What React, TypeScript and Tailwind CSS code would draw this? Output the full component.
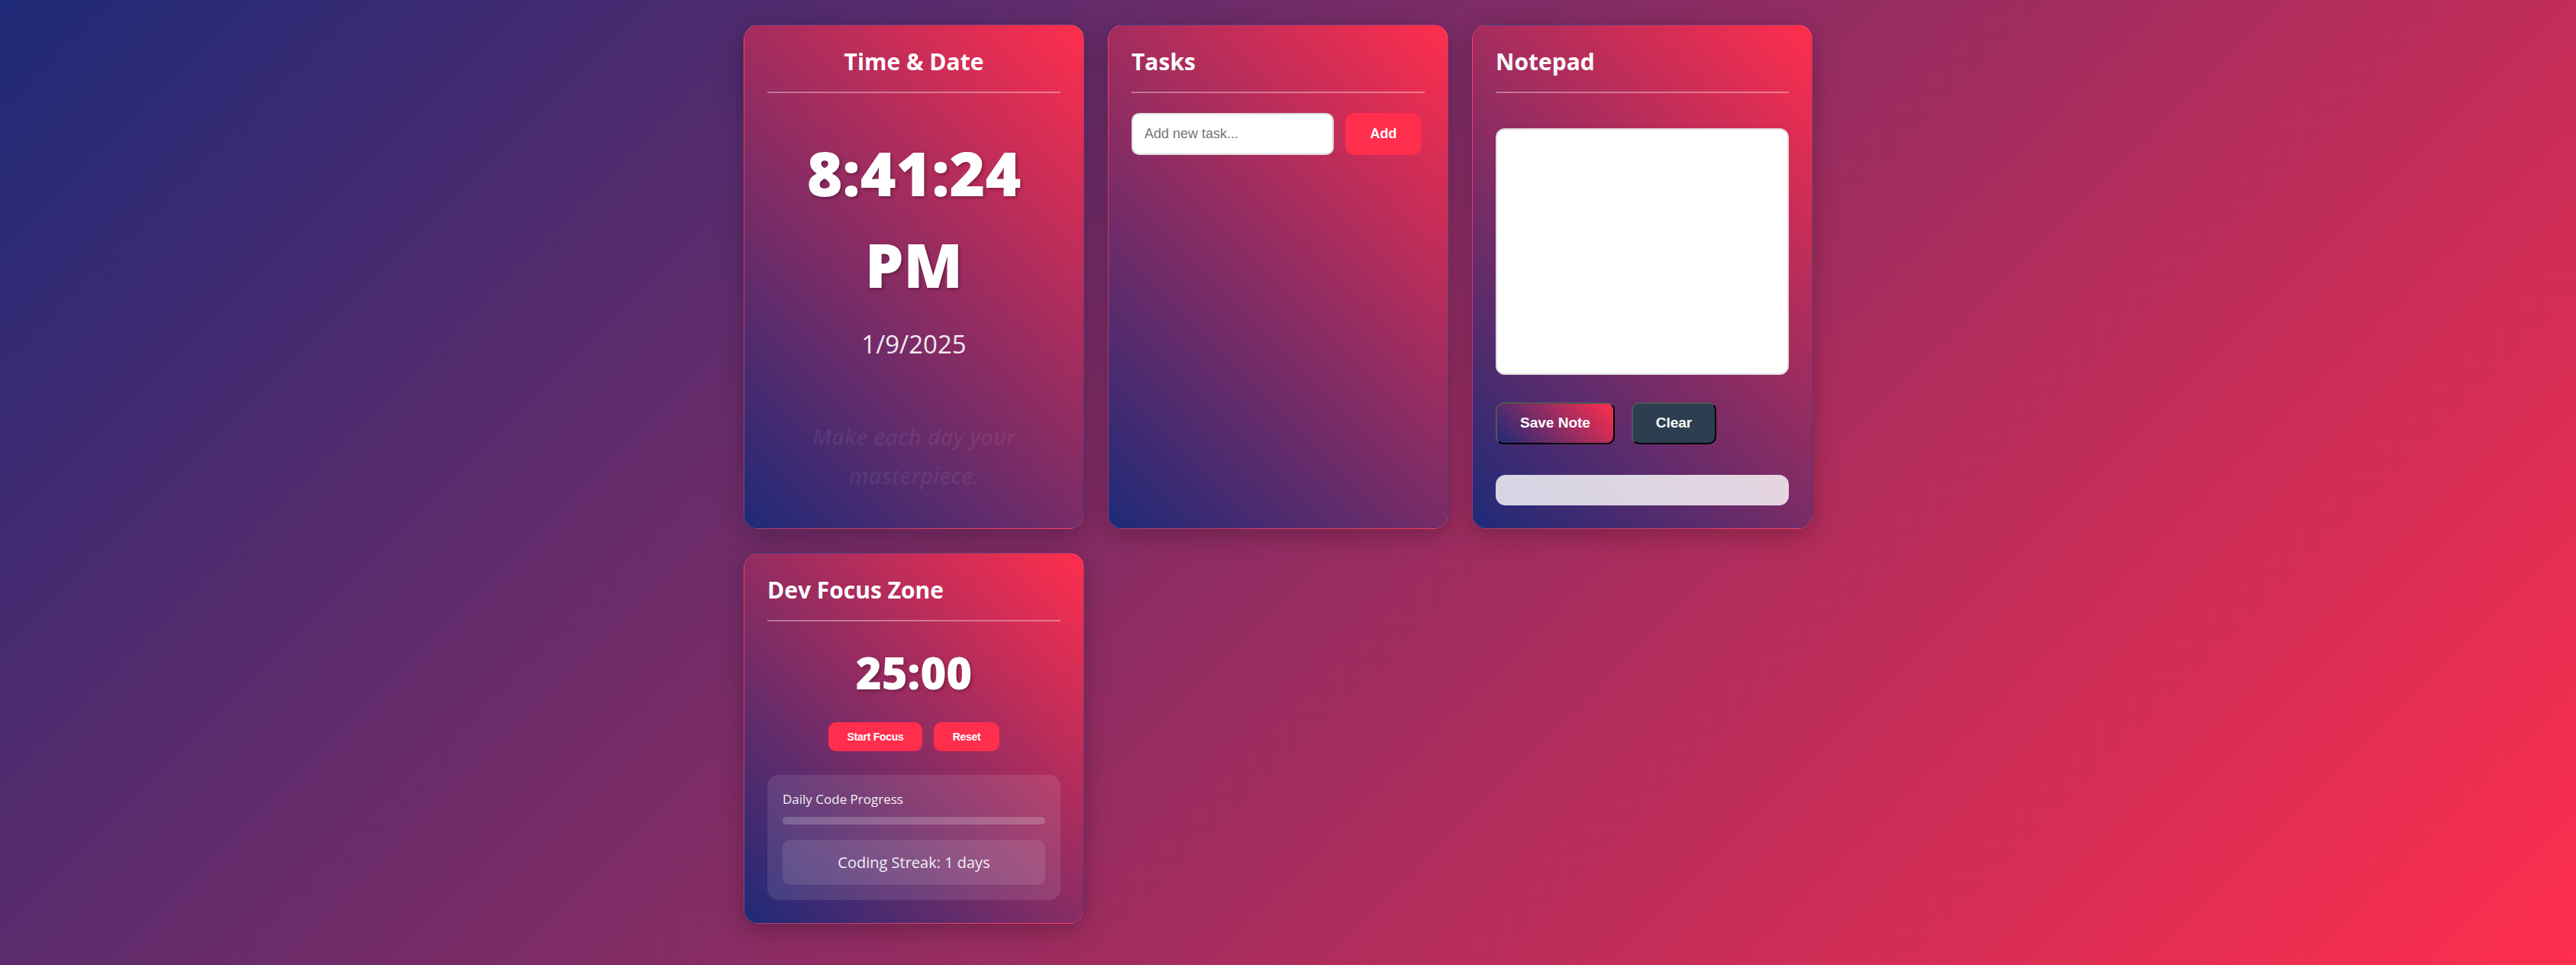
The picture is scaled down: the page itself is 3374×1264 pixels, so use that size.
const card =
  "rounded-[20px] border border-white/10 bg-[linear-gradient(45deg,#1e2a78,#ff2e4d)] p-[30px] shadow-[0_8px_32px_rgba(0,0,0,0.25)]";

const CardTitle = ({ children, center }: { children: React.ReactNode; center?: boolean }) => (
  <h2
    className={`border-b-2 border-white/35 pb-[21px] text-[30px] font-bold leading-[36px] ${
      center ? "text-center" : "text-left"
    }`}
  >
    {children}
  </h2>
);

export default function App() {
  return (
    <div className="min-h-screen w-full bg-[linear-gradient(135deg,#1e2a78,#ff2e4d)] font-['Open_Sans',sans-serif] text-white">
      <div className="mx-auto grid w-[1426px] grid-cols-[repeat(3,446px)] gap-[31px] pt-8">
        {/* Time & Date */}
        <div className={`${card} flex flex-col`}>
          <CardTitle center>Time &amp; Date</CardTitle>
          <div className="mt-[44px] text-center text-[80px] font-extrabold leading-[120px] [text-shadow:2px_2px_4px_rgba(0,0,0,0.3)]">
            8:41:24 PM
          </div>
          <p className="mt-5 text-center text-[33px] font-normal leading-[50px] text-white/90">1/9/2025</p>
          <p className="mt-[70px] text-center text-[29px] font-semibold italic leading-[51px] text-white/[0.08]">
            Make each day your masterpiece.
          </p>
        </div>

        {/* Tasks */}
        <div className={card}>
          <CardTitle>Tasks</CardTitle>
          <div className="mt-[26px] flex gap-[15px]">
            <input
              type="text"
              placeholder="Add new task..."
              className="h-[55px] w-[265px] rounded-[10px] border-2 border-[#dddddd] bg-white px-[15px] font-['Liberation_Sans',Arial,sans-serif] text-[18px] text-gray-800 outline-none placeholder:text-[#757575]"
            />
            <button className="h-[55px] w-[100px] rounded-[12px] bg-[#ff2e4d] font-['Liberation_Sans',Arial,sans-serif] text-[18px] font-bold text-white">
              Add
            </button>
          </div>
        </div>

        {/* Notepad */}
        <div className={card}>
          <CardTitle>Notepad</CardTitle>
          <textarea className="mt-[46px] block h-[323px] w-full resize-none rounded-[12px] border-2 border-[#e0e0e0] bg-white p-3 text-gray-800 outline-none" />
          <div className="mt-[36px] flex gap-[22px]">
            <button className="h-[55px] w-[156px] rounded-[10px] border-2 border-b-black border-l-[#555] border-r-black border-t-[#555] bg-[linear-gradient(45deg,#1e2a78,#ff2e4d)] font-['Liberation_Sans',Arial,sans-serif] text-[19px] font-bold text-white">
              Save Note
            </button>
            <button className="h-[55px] w-[111px] rounded-[10px] border-2 border-b-black border-l-[#555] border-r-black border-t-[#555] bg-[#2c3e50] font-['Liberation_Sans',Arial,sans-serif] text-[19px] font-bold text-white">
              Clear
            </button>
          </div>
          <div className="mt-[40px] h-[40px] rounded-[13px] bg-white/80" />
        </div>

        {/* Dev Focus Zone */}
        <div className={`${card} self-start`}>
          <CardTitle>Dev Focus Zone</CardTitle>
          <div className="mt-[23px] text-center text-[58px] font-extrabold leading-[87px] [text-shadow:2px_2px_4px_rgba(0,0,0,0.3)]">
            25:00
          </div>
          <div className="mt-[22px] flex justify-center gap-[15px]">
            <button className="h-[38px] w-[123px] rounded-[10px] bg-[#ff2e4d] font-['Liberation_Sans',Arial,sans-serif] text-[14px] font-bold tracking-[-0.02em] text-white">
              Start Focus
            </button>
            <button className="h-[38px] w-[86px] rounded-[10px] bg-[#ff2e4d] font-['Liberation_Sans',Arial,sans-serif] text-[14px] font-bold tracking-[-0.02em] text-white">
              Reset
            </button>
          </div>
          <div className="mt-[31px] rounded-[15px] bg-white/10 p-5">
            <p className="text-[17px] leading-[24px] text-white/90">Daily Code Progress</p>
            <div className="mt-[11px] h-[10px] rounded-full bg-white/20" />
            <div className="mt-5 flex h-[59px] items-center justify-center rounded-[10px] bg-white/10 text-[20px] text-white/90">
              Coding Streak: 1 days
            </div>
          </div>
        </div>
      </div>
    </div>
  );
}
